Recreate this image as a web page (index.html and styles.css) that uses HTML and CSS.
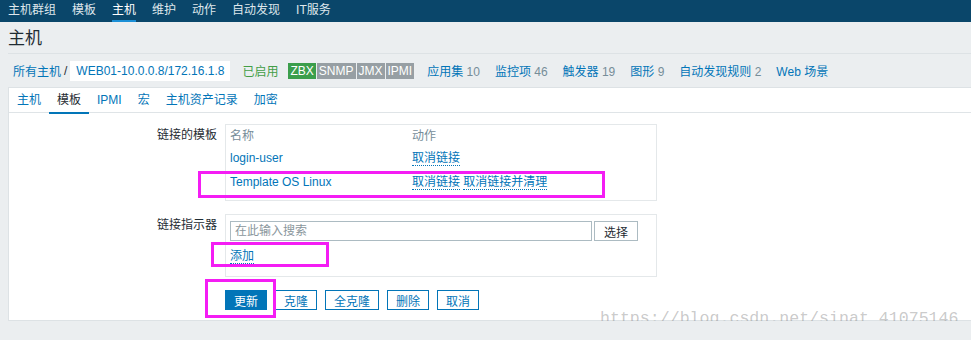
FILE: index.html
```html
<!DOCTYPE html>
<html lang="zh-CN">
<head>
  <meta charset="UTF-8">
  <meta name="viewport" content="width=device-width, initial-scale=1.0">
  <title>主机</title>
  <link rel="stylesheet" href="styles.css">
</head>
<body>
  <header class="top-nav">
    <ul>
      <li><a href="#">主机群组</a></li>
      <li><a href="#">模板</a></li>
      <li class="selected"><a href="#">主机</a></li>
      <li><a href="#">维护</a></li>
      <li><a href="#">动作</a></li>
      <li><a href="#">自动发现</a></li>
      <li><a href="#">IT服务</a></li>
    </ul>
  </header>

  <div class="page-title">
    <h1>主机</h1>
  </div>

  <div class="host-bar">
    <a class="crumb" href="#">所有主机</a>
    <span class="sep">/</span>
    <span class="host-name">WEB01-10.0.0.8/172.16.1.8</span>
    <span class="enabled">已启用</span>
    <span class="badges">
      <span class="badge green">ZBX</span><span class="badge grey">SNMP</span><span class="badge grey">JMX</span><span class="badge grey">IPMI</span>
    </span>
    <a class="count" href="#">应用集 <span>10</span></a>
    <a class="count" href="#">监控项 <span>46</span></a>
    <a class="count" href="#">触发器 <span>19</span></a>
    <a class="count" href="#">图形 <span>9</span></a>
    <a class="count" href="#">自动发现规则 <span>2</span></a>
    <a class="count" href="#">Web 场景</a>
  </div>

  <div class="panel">
    <ul class="tabs">
      <li><a href="#">主机</a></li>
      <li class="selected"><a href="#">模板</a></li>
      <li><a href="#">IPMI</a></li>
      <li><a href="#">宏</a></li>
      <li><a href="#">主机资产记录</a></li>
      <li><a href="#">加密</a></li>
    </ul>

    <form class="host-form">
      <div class="form-row">
        <label>链接的模板</label>
        <div class="field-box templates">
          <div class="th">名称</div>
          <div class="th">动作</div>
          <div class="td"><a class="name" href="#">login-user</a></div>
          <div class="td"><a class="action" href="#">取消链接</a></div>
          <div class="td"><a class="name" href="#">Template OS Linux</a></div>
          <div class="td"><a class="action" href="#">取消链接</a> <a class="action" href="#">取消链接并清理</a></div>
        </div>
      </div>

      <div class="form-row">
        <label>链接指示器</label>
        <div class="field-box linker">
          <div class="search-line">
            <input type="text" placeholder="在此输入搜索">
            <button type="button" class="btn-grey">选择</button>
          </div>
          <div class="add-line"><a class="action" href="#">添加</a></div>
        </div>
      </div>

      <div class="form-buttons">
        <button type="button" class="btn main">更新</button>
        <button type="button" class="btn">克隆</button>
        <button type="button" class="btn">全克隆</button>
        <button type="button" class="btn">删除</button>
        <button type="button" class="btn">取消</button>
      </div>
    </form>
  </div>

  <!-- 截图上的标注框 -->
  <div class="mark mark-templates"></div>
  <div class="mark mark-add"></div>
  <div class="mark mark-update"></div>

  <div class="watermark">https://blog.csdn.net/sinat_41075146</div>
</body>
</html>
```

FILE: styles.css
```css
/* 主机配置页面 */
* {
  margin: 0;
  padding: 0;
  box-sizing: border-box;
}

body {
  position: relative;
  background-color: #ebeef0;
  font-family: "Liberation Sans", "Noto Sans CJK SC", sans-serif;
  font-size: 12px;
  color: #1f2c33;
  overflow: hidden;
}

a {
  color: #0275b8;
  text-decoration: none;
}

ul {
  list-style: none;
}

/* 顶部菜单 */
.top-nav {
  height: 22px;
  background-color: #0a466a;
}

.top-nav ul {
  display: flex;
  gap: 16px;
  padding-left: 8px;
}

.top-nav li {
  height: 22px;
  line-height: 20px;
}

.top-nav a {
  color: #dfe7ec;
}

.top-nav li.selected {
  border-bottom: 2px solid #1b8fd6;
}

.top-nav li.selected a {
  color: #fff;
}

/* 标题 */
.page-title {
  margin-left: 8px;
  padding-top: 6px;
  padding-bottom: 3px;
  border-bottom: 1px solid #dde2e5;
}

.page-title h1 {
  font-size: 17px;
  font-weight: normal;
  line-height: 22px;
}

/* 主机信息条 */
.host-bar {
  display: flex;
  align-items: center;
  height: 33px;
  padding-left: 13px;
  white-space: nowrap;
}

.sep {
  margin: 0 3px 0 3px;
}

.host-name {
  background-color: #fff;
  height: 20px;
  line-height: 20px;
  padding: 0 6px;
  color: #0275b8;
}

.enabled {
  color: #429e47;
  margin-left: 12px;
}

.badges {
  display: flex;
  margin-left: 10px;
}

.badge {
  color: #fff;
  height: 16px;
  line-height: 16px;
  padding: 0 2px;
}

.badge.green {
  background-color: #3b9e4c;
}

.badge.grey {
  background-color: #979fa4;
  margin-left: 1px;
}

.count {
  margin-left: 15px;
}

.badges + .count {
  margin-left: 13px;
}

.count span {
  color: #768d99;
}

/* 白色面板 */
.panel {
  margin-left: 8px;
  background-color: #fff;
  border: 1px solid #dde2e5;
  border-right: none;
  padding-bottom: 10px;
}

.tabs {
  display: flex;
  height: 25px;
  border-bottom: 1px solid #dfe4e7;
}

.tabs li {
  line-height: 24px;
  padding: 0 8px;
}

.tabs li.selected {
  border-bottom: 2px solid #0275b8;
  margin-bottom: -2px;
  height: 26px;
}

.tabs li.selected a {
  color: #1f2c33;
}

/* 表单 */
.host-form {
  padding-top: 11px;
}

.form-row {
  display: grid;
  grid-template-columns: 208px 432px;
  column-gap: 8px;
  margin-bottom: 13px;
}

.form-row label {
  text-align: right;
  padding-top: 4px;
  line-height: 14px;
}

.field-box {
  border: 1px solid #e4e8ea;
  padding: 0 4px;
}

.templates {
  display: grid;
  grid-template-columns: 182px 1fr;
  padding-top: 1px;
  padding-bottom: 6px;
}

.templates .th {
  color: #768d99;
  line-height: 20px;
}

.templates .td {
  line-height: 24px;
}

.action {
  border-bottom: 1px dotted #0275b8;
}

.linker {
  padding-top: 6px;
  padding-bottom: 9px;
}

.search-line {
  display: flex;
  gap: 2px;
}

.search-line input {
  width: 362px;
  height: 20px;
  border: 1px solid #acbbc2;
  padding: 0 4px;
  font-family: inherit;
  font-size: 12px;
  color: #1f2c33;
}

.search-line input::placeholder {
  color: #8a969c;
}

.btn-grey {
  width: 44px;
  height: 20px;
  border: 1px solid #acbbc2;
  background-color: #fff;
  font-family: inherit;
  font-size: 12px;
  color: #1f2c33;
}

.add-line {
  margin-top: 4px;
  line-height: 22px;
}

.form-buttons {
  display: flex;
  gap: 8px;
  margin-left: 216px;
}

.btn {
  height: 20px;
  padding: 0 8px;
  border: 1px solid #0275b8;
  background-color: #fff;
  color: #0275b8;
  font-family: inherit;
  font-size: 12px;
}

.btn.main {
  background-color: #0275b8;
  color: #fff;
}

/* 标注框 */
.mark {
  position: absolute;
  border: 3px solid #f41df4;
}

.mark-templates {
  left: 198px;
  top: 171px;
  width: 407px;
  height: 27px;
}

.mark-add {
  left: 211px;
  top: 242px;
  width: 118px;
  height: 25px;
}

.mark-update {
  left: 205px;
  top: 279px;
  width: 71px;
  height: 39px;
}

.watermark {
  position: absolute;
  left: 600px;
  top: 309px;
  font-family: "Liberation Mono", monospace;
  font-size: 16.6px;
  line-height: 20px;
  color: rgba(120, 120, 120, 0.4);
  white-space: nowrap;
}
```
